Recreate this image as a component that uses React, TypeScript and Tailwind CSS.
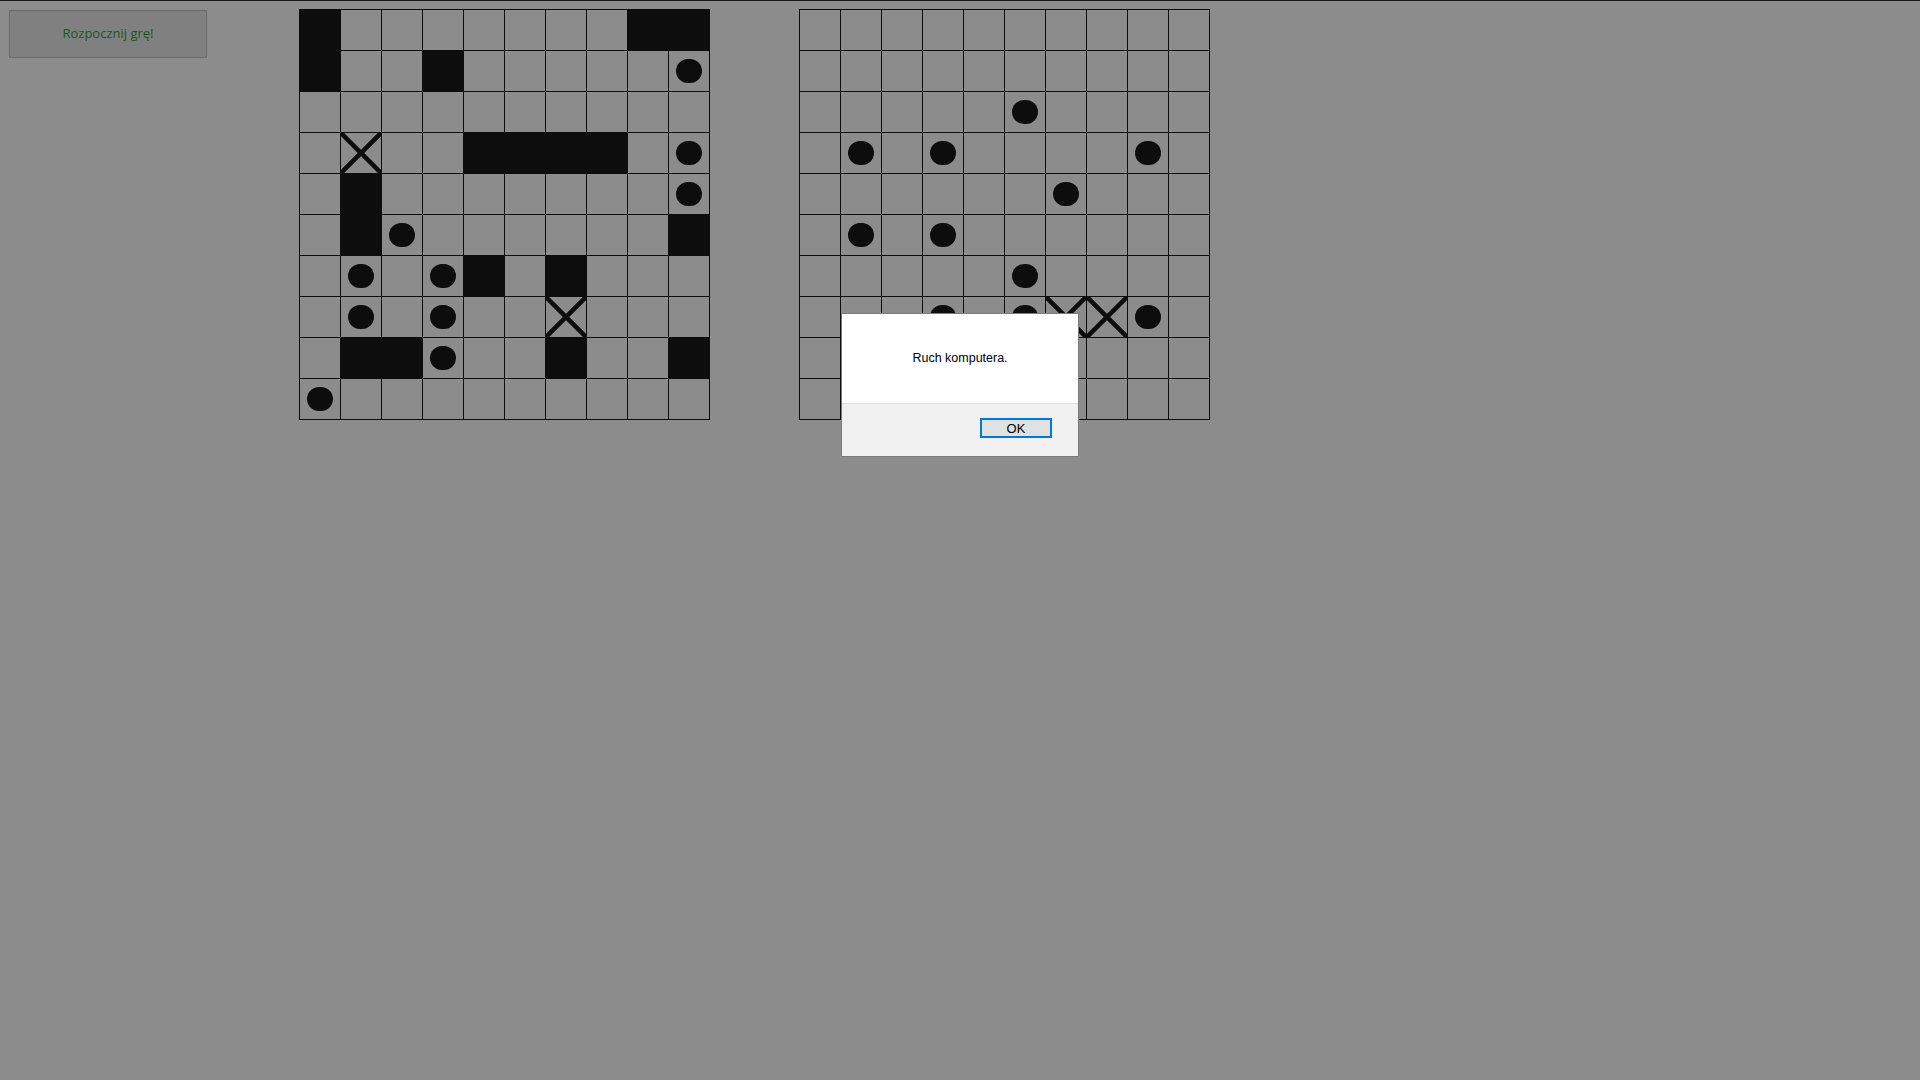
import React from "react";

type Cell = "" | "S" | "O" | "X";

// S = statek (czarne pole), O = pudło, X = trafienie
const parse = (rows: string[]): Cell[][] =>
  rows.map((r) => r.split("").map((c) => (c === "." ? "" : (c as Cell))));

const playerBoard = parse([
  "S.......SS",
  "S..S.....O",
  "..........",
  ".X..SSSS.O",
  ".S.......O",
  ".SO......S",
  ".O.OS.S...",
  ".O.O..X...",
  ".SSO..S..S",
  "O.........",
]);

const computerBoard = parse([
  "..........",
  "..........",
  ".....O....",
  ".O.O....O.",
  "......O...",
  ".O.O......",
  ".....O....",
  "...O.OXXO.",
  "..........",
  "..........",
]);

const Board: React.FC<{ data: Cell[][] }> = ({ data }) => {
  return (
    <div className="border-l border-t border-[#0d0d0d] w-[411px]">
      {data.map((row, y) => (
        <div key={y} className="flex">
          {row.map((cell, x) => (
            <div
              key={x}
              className={
                "relative w-[41px] h-[41px] border-r border-b border-[#0d0d0d] flex items-center justify-center " +
                (cell === "S" ? "bg-[#0d0d0d]" : "")
              }
            >
              {cell === "O" && <div className="w-[26px] h-[24px] rounded-full bg-[#0d0d0d]" />}
              {cell === "X" && (
                <svg className="absolute left-0 top-0" width="40" height="40" viewBox="0 0 40 40">
                  <line x1="0" y1="0" x2="40" y2="40" stroke="#0d0d0d" strokeWidth="4.5" />
                  <line x1="40" y1="0" x2="0" y2="40" stroke="#0d0d0d" strokeWidth="4.5" />
                </svg>
              )}
            </div>
          ))}
        </div>
      ))}
    </div>
  );
};

export default function App() {
  return (
    <div className="relative min-h-screen w-full bg-[#8c8c8c] border-t border-[#1a1a1a] overflow-hidden">
      <div className="flex items-start pt-[8px] pl-[9px]">
        <button className="mt-[1px] w-[198px] h-[48px] bg-[#808080] border border-[#6a6a6a] text-[#1d561d] text-[13px] font-['Open_Sans',sans-serif]">
          Rozpocznij grę!
        </button>
        <div className="ml-[92px]">
          <Board data={playerBoard} />
        </div>
        <div className="ml-[89px]">
          <Board data={computerBoard} />
        </div>
      </div>

      <div className="absolute left-[841px] top-[312px] w-[238px] h-[144px] border border-[#7a7a7a] bg-white flex flex-col font-['Liberation_Sans',Arial,sans-serif]">
        <div className="h-[89px] flex items-center justify-center text-[12.5px] text-black">
          Ruch komputera.
        </div>
        <div className="flex-1 bg-[#f0f0f0] border-t border-[#dfdfdf] flex justify-end pt-[14px] pr-[26px]">
          <button className="w-[72px] h-[20px] bg-[#e1e1e1] border-2 border-[#0078d7] text-[13px] leading-none text-black">
            OK
          </button>
        </div>
      </div>
    </div>
  );
}
